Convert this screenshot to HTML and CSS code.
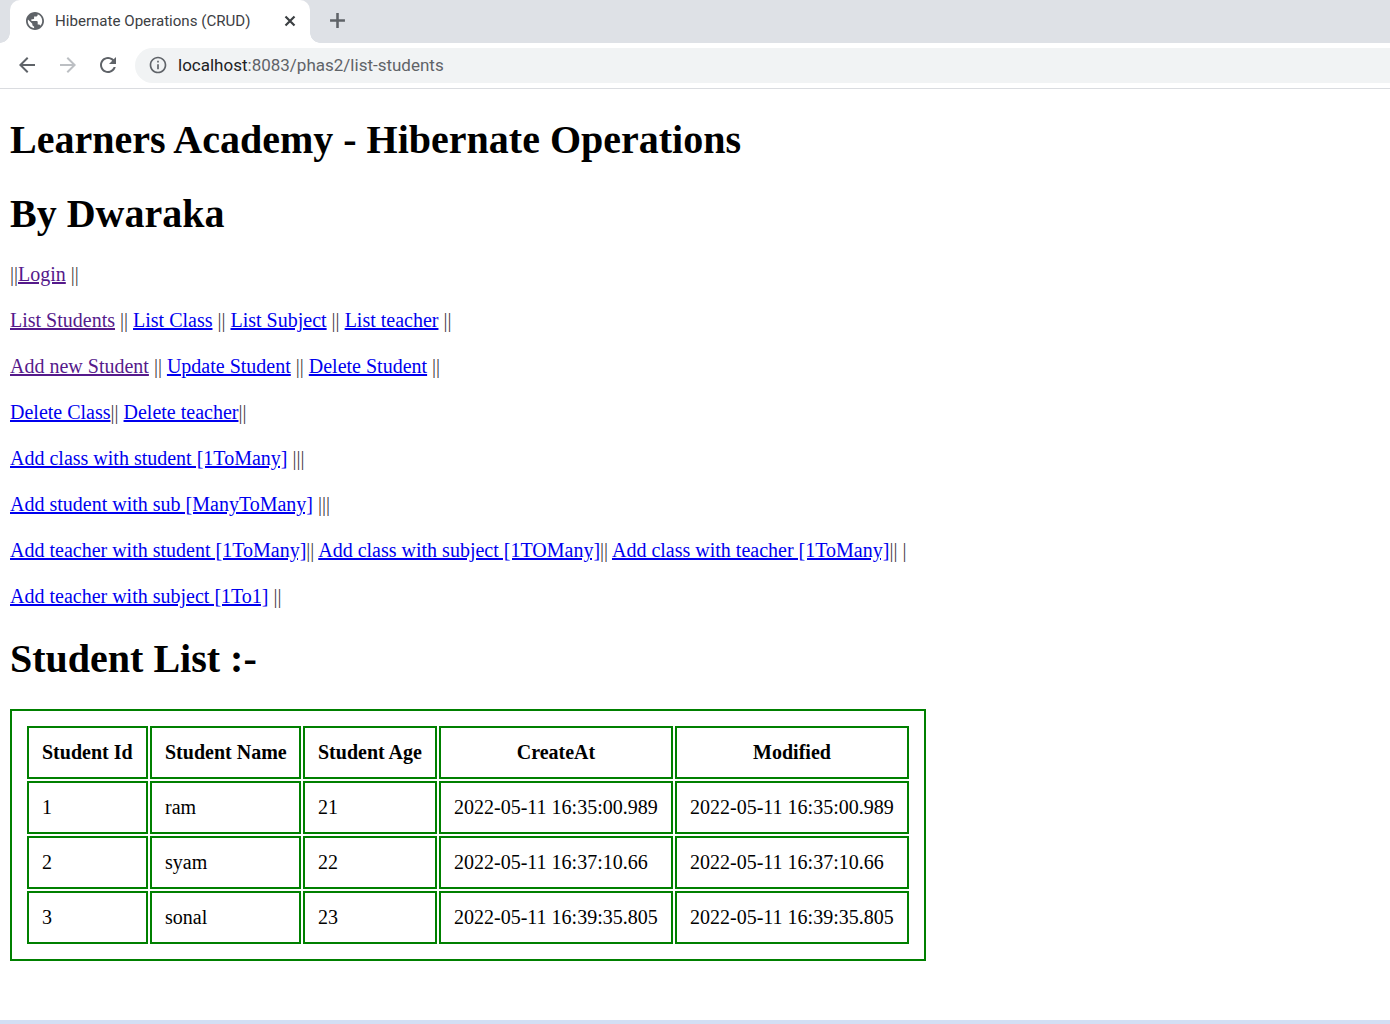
FILE: index.html
```html
<!DOCTYPE html>
<html lang="en">
<head>
<meta charset="utf-8">
<title>Hibernate Operations (CRUD)</title>
<link rel="stylesheet" href="styles.css">
</head>
<body>
<header class="chrome">
  <div class="tabstrip">
    <div class="tab">
      <svg class="favicon" viewBox="2 2 20 20"><path d="M12 2C6.48 2 2 6.48 2 12s4.48 10 10 10 10-4.48 10-10S17.52 2 12 2zm-1 17.93c-3.95-.49-7-3.85-7-7.93 0-.62.08-1.21.21-1.79L9 15v1c0 1.1.9 2 2 2v1.93zm6.9-2.54c-.26-.81-1-1.39-1.9-1.39h-1v-3c0-.55-.45-1-1-1H8v-2h2c.55 0 1-.45 1-1V7h2c1.1 0 2-.9 2-2v-.41c2.93 1.19 5 4.06 5 7.41 0 2.08-.8 3.97-2.1 5.39z"/></svg>
      <span class="tab-title">Hibernate Operations (CRUD)</span>
      <svg class="tab-close" viewBox="0 0 12 12"><path d="M1.5 1.5l9 9M10.500 1.500l-9 9"/></svg>
    </div>
    <svg class="new-tab" viewBox="0 0 16 16"><path d="M8 1v14M1 8h14"/></svg>
  </div>
  <div class="toolbar">
    <svg class="nav-icon" viewBox="0 0 24 24"><path d="M20 11H7.830l5.590-5.590L12 4l-8 8 8 8 1.410-1.410L7.830 13H20v-2z"/></svg>
    <svg class="nav-icon nav-off" viewBox="0 0 24 24"><path d="M4 11h12.170l-5.590-5.590L12 4l8 8-8 8-1.410-1.410L16.170 13H4v-2z"/></svg>
    <svg class="nav-icon" viewBox="0 0 24 24"><path d="M17.650 6.350C16.200 4.900 14.210 4 12 4c-4.420 0-7.990 3.580-7.990 8s3.570 8 7.990 8c3.730 0 6.840-2.550 7.730-6h-2.080c-.82 2.330-3.040 4-5.650 4-3.310 0-6-2.690-6-6s2.690-6 6-6c1.660 0 3.140.69 4.220 1.780L13 11h7V4l-2.350 2.350z"/></svg>
    <div class="omnibox">
      <svg class="info" viewBox="0 0 24 24"><path d="M11 7h2v2h-2zm0 4h2v6h-2zm1-9C6.480 2 2 6.480 2 12s4.480 10 10 10 10-4.480 10-10S17.520 2 12 2zm0 18c-4.410 0-8-3.590-8-8s3.590-8 8-8 8 3.590 8 8-3.590 8-8 8z"/></svg>
      <span class="url"><span class="host">localhost</span>:8083/phas2/list-students</span>
    </div>
  </div>
</header>
<main class="page">
  <h1>Learners Academy - Hibernate Operations</h1>
  <h1>By Dwaraka</h1>
  <p><span class="sep">||</span><a class="seen" href="#">Login</a> <span class="sep">||</span></p>
  <p><a class="seen" href="#">List Students</a> <span class="sep">||</span> <a href="#">List Class</a> <span class="sep">||</span> <a href="#">List Subject</a> <span class="sep">||</span> <a href="#">List teacher</a> <span class="sep">||</span></p>
  <p><a class="seen" href="#">Add new Student</a> <span class="sep">||</span> <a href="#">Update Student</a> <span class="sep">||</span> <a href="#">Delete Student</a> <span class="sep">||</span></p>
  <p><a href="#">Delete Class</a><span class="sep">||</span> <a href="#">Delete teacher</a><span class="sep">||</span></p>
  <p><a href="#">Add class with student [1ToMany]</a> <span class="sep">|||</span></p>
  <p><a href="#">Add student with sub [ManyToMany]</a> <span class="sep">|||</span></p>
  <p><a href="#">Add teacher with student [1ToMany]</a><span class="sep">||</span> <a href="#">Add class with subject [1TOMany]</a><span class="sep">||</span> <a href="#">Add class with teacher [1ToMany]</a><span class="sep">|| |</span></p>
  <p><a href="#">Add teacher with subject [1To1]</a> <span class="sep">||</span></p>
  <h1>Student List :-</h1>
  <div class="frame">
    <table class="students">
      <colgroup><col class="c-id"><col class="c-name"><col class="c-age"><col class="c-date"><col class="c-date"></colgroup>
      <thead>
        <tr><th>Student Id</th><th>Student Name</th><th>Student Age</th><th class="mid">CreateAt</th><th class="mid">Modified</th></tr>
      </thead>
      <tbody>
        <tr><td>1</td><td>ram</td><td>21</td><td>2022-05-11 16:35:00.989</td><td>2022-05-11 16:35:00.989</td></tr>
        <tr><td>2</td><td>syam</td><td>22</td><td>2022-05-11 16:37:10.66</td><td>2022-05-11 16:37:10.66</td></tr>
        <tr><td>3</td><td>sonal</td><td>23</td><td>2022-05-11 16:39:35.805</td><td>2022-05-11 16:39:35.805</td></tr>
      </tbody>
    </table>
  </div>
</main>
<div class="bottom-strip"></div>
</body>
</html>
```
FILE: styles.css
```css
* { box-sizing: border-box; }
html, body { margin: 0; padding: 0; }
body {
  height: 1024px;
  display: flex;
  flex-direction: column;
  overflow: hidden;
  background: #fff;
  color: #000;
  font-family: "Liberation Serif", serif;
  font-size: 20px;
}
.chrome { flex: none; font-family: Roboto, "Open Sans", sans-serif; }
.tabstrip {
  height: 43px;
  background: #dee1e6;
  display: flex;
  align-items: center;
  padding-left: 10px;
}
.tab {
  position: relative;
  width: 300px;
  height: 43px;
  background: #fff;
  border-radius: 10px 10px 0 0;
  display: flex;
  align-items: center;
  padding: 0 14px 2px 16px;
}
.tab::before, .tab::after {
  content: "";
  position: absolute;
  bottom: 0;
  width: 10px;
  height: 10px;
}
.tab::before { left: -10px; background: radial-gradient(circle at 0 0, #dee1e6 9.500px, #fff 10px); }
.tab::after { right: -10px; background: radial-gradient(circle at 100% 0, #dee1e6 9.500px, #fff 10px); }
.favicon { width: 18px; height: 18px; fill: #5f6368; flex: none; }
.tab-title {
  flex: 1;
  margin-left: 11px;
  font-size: 15.100px;
  color: #3c4043;
  white-space: nowrap;
}
.tab-close { width: 12px; height: 12px; fill: none; stroke: #3c4043; stroke-width: 2.200; flex: none; }
.new-tab { width: 17px; height: 17px; margin: -3px 0 0 19px; fill: none; stroke: #5f6368; stroke-width: 2.400; }
.toolbar {
  height: 46px;
  background: #fff;
  border-bottom: 1px solid #dadce0;
  display: flex;
  align-items: center;
  padding: 0 0 1px 15px;
}
.nav-icon { width: 24px; height: 24px; margin-right: 16.500px; fill: #5f6368; flex: none; }
.nav-off { fill: #bcbfc3; }
.omnibox {
  flex: 1;
  height: 35px;
  margin-left: -1.500px;
  background: #f1f3f4;
  border-radius: 17.500px 0 0 17.500px;
  display: flex;
  align-items: center;
  padding-left: 13px;
}
.info { width: 20px; height: 20px; fill: #5f6368; flex: none; }
.url { margin-left: 10px; font-size: 17px; color: #5f6368; white-space: nowrap; }
.host { color: #202124; }
.page { flex: 1; padding: 1px 10px 0; }
h1 {
  margin: 26px 0 23px;
  font-size: 40px;
  line-height: 48px;
  font-weight: bold;
}
p { margin: 20px 0; line-height: 26px; }
a { color: #0000ee; text-decoration: underline; }
a.seen { color: #551a8b; }
.sep { color: #444; }
.frame {
  width: 916px;
  height: 252px;
  margin-top: 26px;
  border: 2px solid #008000;
  padding: 15px;
}
.students {
  border-collapse: separate;
  border-spacing: 2px;
  margin: -2px;
  table-layout: fixed;
  width: 886px;
}
.c-id { width: 121px; }
.c-name { width: 151px; }
.c-age { width: 134px; }
.c-date { width: 234px; }
th, td {
  height: 53px;
  padding: 0 13px;
  border: 2px solid #008000;
  font-size: 20px;
  text-align: left;
  white-space: nowrap;
}
th.mid { text-align: center; }
.bottom-strip { flex: none; height: 4px; background: #d3dff4; }
```
